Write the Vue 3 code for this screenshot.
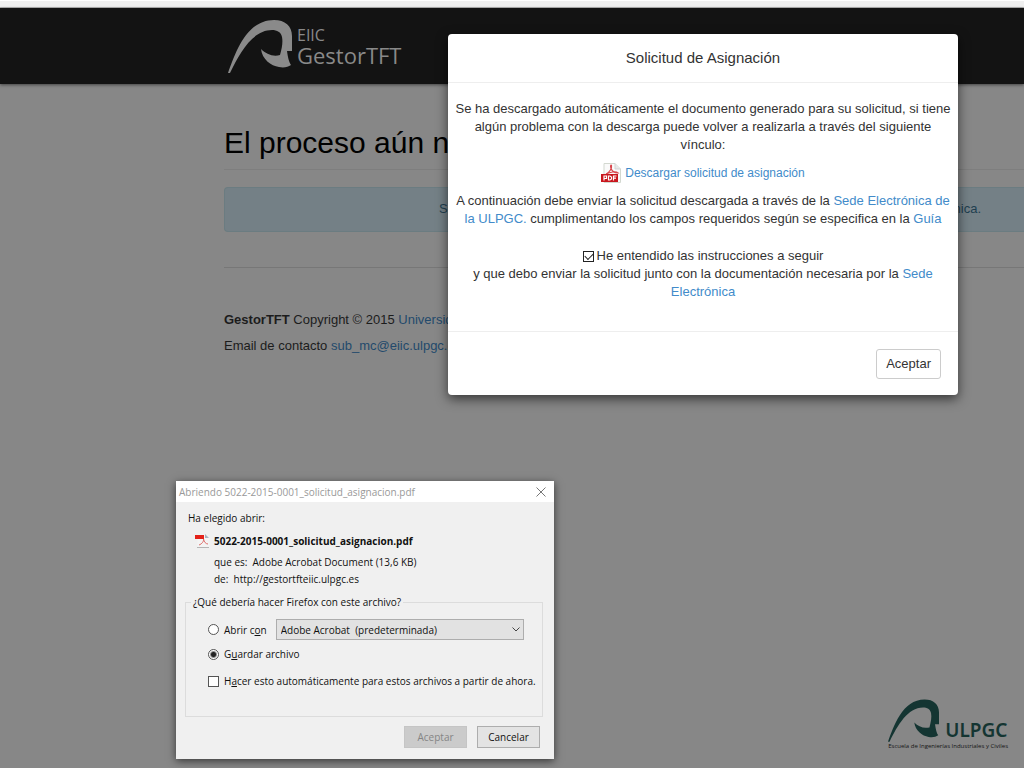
<script setup>
import { ref } from 'vue'

const understood = ref(true)
const action = ref('save')
const always = ref(false)
const app = ref('acrobat')
</script>

<template>
  <div class="page">
    <div class="browser-edge"></div>
    <header class="navbar">
      <a class="brand" href="#" aria-label="EIIC GestorTFT">
        <svg class="brand-mark" viewBox="0 0 64 54" aria-hidden="true">
          <path d="M0 53C7 34 18 0 46 0C57 0 64 6 64 16V31H59C60 38 61 42 63 45C60 47 56 48 51 47C43 46 34 39 33 29C38 34 45 37 52 35C54 28 55 22 54 17C53 12 49 10 44 10C25 10 12 32 2 53Z" />
        </svg>
        <span class="brand-text">
          <span class="brand-small">EIIC</span>
          <span class="brand-large">GestorTFT</span>
        </span>
      </a>
    </header>

    <main class="content">
      <h1>El proceso aún n</h1>
      <div class="alert"><span>S</span><span>nica.</span></div>
      <footer class="site-footer">
        <p><strong>GestorTFT</strong> Copyright © 2015 <a href="#">Universida</a></p>
        <p>Email de contacto <a href="#">sub_mc@eiic.ulpgc.e</a></p>
      </footer>
    </main>

    <div class="school">
      <div class="school-row">
        <svg class="school-mark" viewBox="0 0 64 54" aria-hidden="true">
          <path d="M0 53C7 34 18 0 46 0C57 0 64 6 64 16V31H59C60 38 61 42 63 45C60 47 56 48 51 47C43 46 34 39 33 29C38 34 45 37 52 35C54 28 55 22 54 17C53 12 49 10 44 10C25 10 12 32 2 53Z" />
        </svg>
        <span class="school-name">ULPGC</span>
      </div>
      <span class="school-sub">Escuela de Ingenierías Industriales y Civiles</span>
    </div>

    <section class="modal" role="dialog" aria-labelledby="modal-title">
      <h2 id="modal-title" class="modal-title">Solicitud de Asignación</h2>
      <div class="modal-body">
        <p>Se ha descargado automáticamente el documento generado para su solicitud, si tiene algún problema con la descarga puede volver a realizarla a través del siguiente vínculo:</p>
        <p class="download">
          <svg class="pdf" viewBox="0 0 20 20" aria-hidden="true">
            <path d="M3 .5H14L19.500 6V19.500H3Z" fill="#fafafa" stroke="#d3d8d0" />
            <path d="M14 .5V6H19.500" fill="#e8e8e8" stroke="#d3d3d3" />
            <path d="M5 11C9 9 11 5 10.500 2.500C10 1 9 3 10 5.500C11 8 14 10 17 10C15 8 9 9 5 11Z" fill="none" stroke="#d8474d" stroke-width="1.200" />
            <rect y="11" width="17" height="8" fill="#c9161d" />
            <path d="M3 17.500V13H5.500V15.500H3M7.500 13V17H9L10.500 16V14L9 13ZM12.500 17.500V13H15.500M12.500 15.200H15" fill="none" stroke="#fff" stroke-width="1.200" />
          </svg>
          <a href="#">Descargar solicitud de asignación</a>
        </p>
        <p>A continuación debe enviar la solicitud descargada a través de la <a href="#">Sede Electrónica de la ULPGC.</a> cumplimentando los campos requeridos según se especifica en la <a href="#">Guía</a></p>
        <div class="confirm">
          <label class="agree">
            <input v-model="understood" type="checkbox" />
            He entendido las instrucciones a seguir
          </label>
          <p>y que debo enviar la solicitud junto con la documentación necesaria por la <a href="#">Sede Electrónica</a></p>
        </div>
      </div>
      <div class="modal-footer">
        <button type="button" class="btn">Aceptar</button>
      </div>
    </section>

    <section class="window" role="dialog" aria-labelledby="window-title">
      <div class="titlebar">
        <span id="window-title">Abriendo 5022-2015-0001_solicitud_asignacion.pdf</span>
        <button type="button" class="close" aria-label="Cerrar">
          <svg viewBox="0 0 10 10"><path d="M.5 .5L9.500 9.500M9.500 .5L.5 9.500" /></svg>
        </button>
      </div>
      <div class="window-body">
        <p class="chosen">Ha elegido abrir:</p>
        <div class="file">
          <svg class="file-icon" viewBox="0 0 15 15" aria-hidden="true">
            <path d="M2.500 .5H10L14.500 4V13.500H2.500Z" fill="#f4f4f4" />
            <path d="M2 13.500H14" stroke="#b5b5b5" />
            <path d="M10 0L14 4H10Z" fill="#aab0bd" />
            <rect y="1" width="9" height="4" fill="#e32119" />
            <path d="M4 11C7 10 9 7 8.500 5M8.500 5C9 8 11 10 13 10" fill="none" stroke="#df6b68" />
          </svg>
          <div class="file-info">
            <strong>5022-2015-0001_solicitud_asignacion.pdf</strong>
            <span class="kind">que es:&ensp;Adobe Acrobat Document (13,6 KB)</span>
            <span>de:&nbsp; http://gestortfteiic.ulpgc.es</span>
          </div>
        </div>
        <fieldset>
          <legend>¿Qué debería hacer Firefox con este archivo?</legend>
          <div class="option open">
            <input id="open-with" v-model="action" type="radio" name="action" value="open" />
            <label for="open-with">Abrir c<u>o</u>n</label>
            <div class="select-wrap">
              <select v-model="app" aria-label="Aplicación">
                <option value="acrobat">Adobe Acrobat&nbsp; (predeterminada)</option>
              </select>
              <svg viewBox="0 0 8 5" aria-hidden="true"><path d="M.5 .5L4 4L7.500 .5" /></svg>
            </div>
          </div>
          <div class="option save">
            <input id="save-file" v-model="action" type="radio" name="action" value="save" />
            <label for="save-file">G<u>u</u>ardar archivo</label>
          </div>
          <div class="option">
            <input id="always" v-model="always" type="checkbox" />
            <label for="always">H<u>a</u>cer esto automáticamente para estos archivos a partir de ahora.</label>
          </div>
        </fieldset>
        <div class="window-actions">
          <button type="button" disabled>Aceptar</button>
          <button type="button">Cancelar</button>
        </div>
      </div>
    </section>
  </div>
</template>

<style>
body {
  background: #878787;
}
</style>

<style scoped>
* {
  box-sizing: border-box;
}
.page {
  position: relative;
  min-height: 100vh;
  overflow: hidden;
  background: #878787;
  color: #1c1c1c;
  font: 13px/18px "Liberation Sans", Arial, sans-serif;
}
p,
h1,
h2 {
  margin: 0;
}
a {
  text-decoration: none;
}
.browser-edge {
  height: 8px;
  background: #f0f0f0;
  border-top: 1px solid #fff;
  border-bottom: 1px solid #b5b5b5;
}
.navbar {
  display: flex;
  height: 76px;
  padding: 12px 228px 0;
  background: #131313;
  box-shadow: 0 1px 3px rgba(0, 0, 0, 0.5);
}
.brand {
  display: flex;
  align-items: flex-start;
  gap: 5px;
  color: #898989;
  font-family: "Open Sans", "Noto Sans", sans-serif;
}
.brand-mark {
  width: 64px;
  height: 54px;
  fill: #8a8a8a;
}
.brand-text {
  display: flex;
  flex-direction: column;
  padding-top: 5px;
}
.brand-small {
  font-size: 16px;
  line-height: 20px;
}
.brand-large {
  font-size: 22px;
  line-height: 20px;
}
.content {
  padding: 42px 0 0 224px;
}
h1 {
  padding-bottom: 9px;
  border-bottom: 1px solid #7e7e7e;
  color: #000;
  font-size: 30px;
  font-weight: 400;
  line-height: 34px;
}
.alert {
  display: flex;
  justify-content: space-between;
  margin-top: 17px;
  padding: 12px 43px 13px 214px;
  border: 1px solid #6b7c81;
  border-right: 0;
  border-radius: 4px 0 0 4px;
  background: #748086;
  color: #1f3f50;
}
.site-footer {
  margin-top: 35px;
  padding-top: 43px;
  border-top: 1px solid #777;
}
.site-footer p {
  margin-bottom: 8px;
}
.site-footer a {
  color: #234a6c;
}
.school {
  position: absolute;
  right: 16px;
  bottom: 19px;
  display: flex;
  flex-direction: column;
  color: #143532;
}
.school-row {
  display: flex;
  align-items: flex-end;
  gap: 6px;
}
.school-mark {
  width: 51px;
  height: 44px;
  fill: #143532;
}
.school-name {
  font: 600 19px/26px "Noto Sans", sans-serif;
}
.school-sub {
  color: #151515;
  font: 6px/6px "Open Sans", sans-serif;
}
.modal {
  position: absolute;
  top: 34px;
  right: 66px;
  width: 510px;
  border-radius: 4px;
  background: #fff;
  box-shadow: 0 4px 12px rgba(0, 0, 0, 0.6);
  color: #333;
}
.modal a {
  color: #428bca;
}
.modal-title {
  padding: 14px;
  border-bottom: 1px solid #eee;
  font-size: 15px;
  font-weight: 400;
  line-height: 20px;
  text-align: center;
}
.modal-body {
  padding: 17px 6px 30px;
  text-align: center;
}
.download {
  display: flex;
  align-items: center;
  justify-content: center;
  gap: 4px;
  margin: 9px 0;
  font-size: 12px;
}
.pdf {
  width: 20px;
  height: 20px;
}
.confirm {
  padding: 19px 0 0;
}
.agree {
  display: flex;
  align-items: center;
  justify-content: center;
  gap: 3px;
}
.agree input {
  appearance: none;
  width: 11px;
  height: 11px;
  margin: 0;
  border: 1px solid #222;
  background: #fff;
}
.agree input:checked::after {
  content: "";
  display: block;
  width: 7px;
  height: 4px;
  margin: 1px;
  border: solid #222;
  border-width: 0 0 1px 1px;
  transform: rotate(-45deg);
}
.modal-footer {
  display: flex;
  justify-content: flex-end;
  padding: 17px 17px 16px;
  border-top: 1px solid #eee;
}
.btn {
  padding: 5px 9px;
  border: 1px solid #ccc;
  border-radius: 3px;
  background: #fff;
  color: #333;
  font: inherit;
}
.window {
  position: absolute;
  top: 481px;
  left: 176px;
  width: 378px;
  background: #f0f0f0;
  box-shadow: 0 2px 8px rgba(0, 0, 0, 0.6);
  color: #111;
  font: 10px/14px "Open Sans", "Noto Sans", sans-serif;
}
.titlebar {
  display: flex;
  align-items: center;
  justify-content: space-between;
  height: 21px;
  padding: 0 8px 0 3px;
  background: #fff;
  color: #999;
}
.close {
  display: flex;
  padding: 0;
  border: 0;
  background: none;
}
.close svg {
  width: 10px;
  height: 10px;
  fill: none;
  stroke: #777;
}
.window-body {
  padding: 9px 11px 11px 9px;
}
.chosen {
  padding-left: 3px;
}
.file {
  display: flex;
  gap: 4px;
  padding: 9px 0 0 10px;
}
.file-icon {
  width: 15px;
  height: 15px;
}
.file-info {
  display: flex;
  flex-direction: column;
  gap: 3px;
}
.kind {
  margin-top: 4px;
}
fieldset {
  min-width: 0;
  margin: 9px 0 0;
  padding: 10px 18px 28px 22px;
  border: 1px solid #dcdcdc;
}
legend {
  margin-left: -17px;
  padding: 0 2px;
}
.option {
  display: flex;
  align-items: center;
  white-space: nowrap;
}
.option input {
  appearance: none;
  flex: none;
  width: 11px;
  height: 11px;
  margin: 0 5px 0 0;
  border: 1px solid #555;
  background: #fff;
}
.option input[type="radio"] {
  border-radius: 50%;
}
.option input[type="radio"]:checked {
  background: radial-gradient(circle, #222 2px, #fff 4px);
}
.save {
  margin: 7px 0 13px;
}
.select-wrap {
  position: relative;
  flex: 1;
  margin-left: 9px;
}
.select-wrap svg {
  position: absolute;
  top: 8px;
  right: 4px;
  width: 8px;
  height: 5px;
  fill: none;
  stroke: #444;
  pointer-events: none;
}
select {
  appearance: none;
  display: block;
  width: 100%;
  height: 21px;
  padding: 0 4px;
  border: 1px solid #adadad;
  border-radius: 0;
  background: #e2e2e2;
  color: #111;
  font: inherit;
}
.window-actions {
  display: flex;
  justify-content: flex-end;
  gap: 10px;
  margin: 9px 3px 0 0;
}
.window-actions button {
  width: 63px;
  height: 22px;
  padding: 0;
  border: 1px solid #adadad;
  background: #e3e3e3;
  color: #111;
  font: inherit;
}
.window-actions button:disabled {
  border-color: #c5c5c5;
  background: #cbcbcb;
  color: #858585;
}
</style>
